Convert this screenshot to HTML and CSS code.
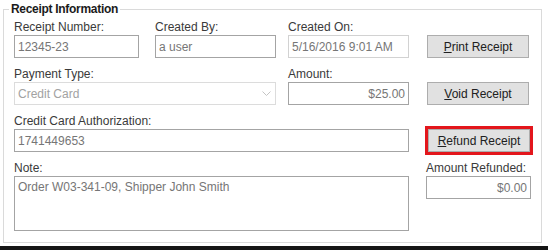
FILE: index.html
```html
<!DOCTYPE html>
<html lang="en">
<head>
    <meta charset="UTF-8">
    <meta name="viewport" content="width=device-width, initial-scale=1.0">
    <title>Receipt Information</title>
    <link rel="stylesheet" href="styles.css">
</head>
<body>

    <div class="window">
        <fieldset class="group">
            <legend>Receipt Information</legend>

            <div class="form">
                <div class="field">
                    <label>Receipt Number:</label>
                    <input type="text" class="box" value="12345-23" readonly>
                </div>
                <div class="field col-2">
                    <label>Created By:</label>
                    <input type="text" class="box" value="a user" readonly>
                </div>
                <div class="field col-3">
                    <label>Created On:</label>
                    <input type="text" class="box light" value="5/16/2016 9:01 AM" readonly>
                </div>
                <div class="action col-4">
                    <button><u>P</u>rint Receipt</button>
                </div>

                <div class="field span-2">
                    <label>Payment Type:</label>
                    <div class="box combo">
                        <span>Credit Card</span>
                        <svg width="9" height="5" viewBox="0 0 9 5"><path d="M0.5 0.5 L4.5 4.5 L8.5 0.5" fill="none" stroke="#c4c4c4" stroke-width="1"/></svg>
                    </div>
                </div>
                <div class="field col-3">
                    <label>Amount:</label>
                    <input type="text" class="box money" value="$25.00" readonly>
                </div>
                <div class="action col-4">
                    <button><u>V</u>oid Receipt</button>
                </div>

                <div class="field span-3">
                    <label>Credit Card Authorization:</label>
                    <input type="text" class="box" value="1741449653" readonly>
                </div>
                <div class="action col-4">
                    <button class="highlight"><u>R</u>efund Receipt</button>
                </div>

                <div class="field span-3">
                    <label>Note:</label>
                    <textarea class="box note" readonly>Order W03-341-09, Shipper John Smith</textarea>
                </div>
                <div class="field col-4 refund">
                    <label>Amount Refunded:</label>
                    <input type="text" class="box money" value="$0.00" readonly>
                </div>
            </div>
        </fieldset>
    </div>

</body>
</html>
```

FILE: styles.css
```css
body {
    margin: 0;
    background: #fff;
    font-family: "Liberation Sans", Arial, sans-serif;
    font-size: 12px;
    color: #333;
}

.window {
    height: 246px;
    border-bottom: 4px solid #151515;
    overflow: hidden;
}

.group {
    margin: 2px 6px 0 3px;
    padding: 4px 9px 0 10px;
    height: 235px;
    border: 1px solid #dadada;
}

.group legend {
    margin-left: -5px;
    padding: 0 2px;
    font-weight: bold;
    line-height: 14px;
    color: #1b1b1b;
    letter-spacing: -0.3px;
}

/* grid with spacer columns, since the gaps are uneven */
.form {
    display: grid;
    grid-template-columns: 125px 16px 121px 12px 121px 18px 104px;
    row-gap: 9px;
}

.field {
    display: flex;
    flex-direction: column;
    gap: 1px;
    grid-column: 1;
}

.col-2 { grid-column: 3; }
.col-3 { grid-column: 5; }
.col-4 { grid-column: 7; }
.span-2 { grid-column: 1 / 4; }
.span-3 { grid-column: 1 / 6; }

.field label {
    line-height: 14px;
    color: #3a3a3a;
}

.box {
    box-sizing: border-box;
    height: 23px;
    margin: 0;
    padding: 0 3px;
    border: 1px solid #a4a4a4;
    background: #fff;
    font-family: inherit;
    font-size: 12px;
    color: #767676;
    outline: none;
}

.box.light {
    border-color: #d2d2d2;
}

.money {
    text-align: right;
}

.combo {
    display: flex;
    align-items: center;
    justify-content: space-between;
    padding: 0 4px 0 3px;
    border-color: #dcdcdc;
    color: #a2a2a2;
}

.note {
    height: 55px;
    padding: 3px;
    resize: none;
}

.action {
    display: flex;
    align-items: flex-end;
}

button {
    box-sizing: border-box;
    width: 102px;
    height: 23px;
    padding: 0;
    border: 1px solid #adadad;
    background: #e1e1e1;
    font-family: inherit;
    font-size: 12px;
    color: #202020;
}

button.highlight {
    margin-left: 1px;
    outline: 3px solid #e3161c;
    outline-offset: 0;
}

.refund label {
    margin-left: -1px;
}

.refund .box {
    margin-left: -1px;
    width: 105px;
}
```
